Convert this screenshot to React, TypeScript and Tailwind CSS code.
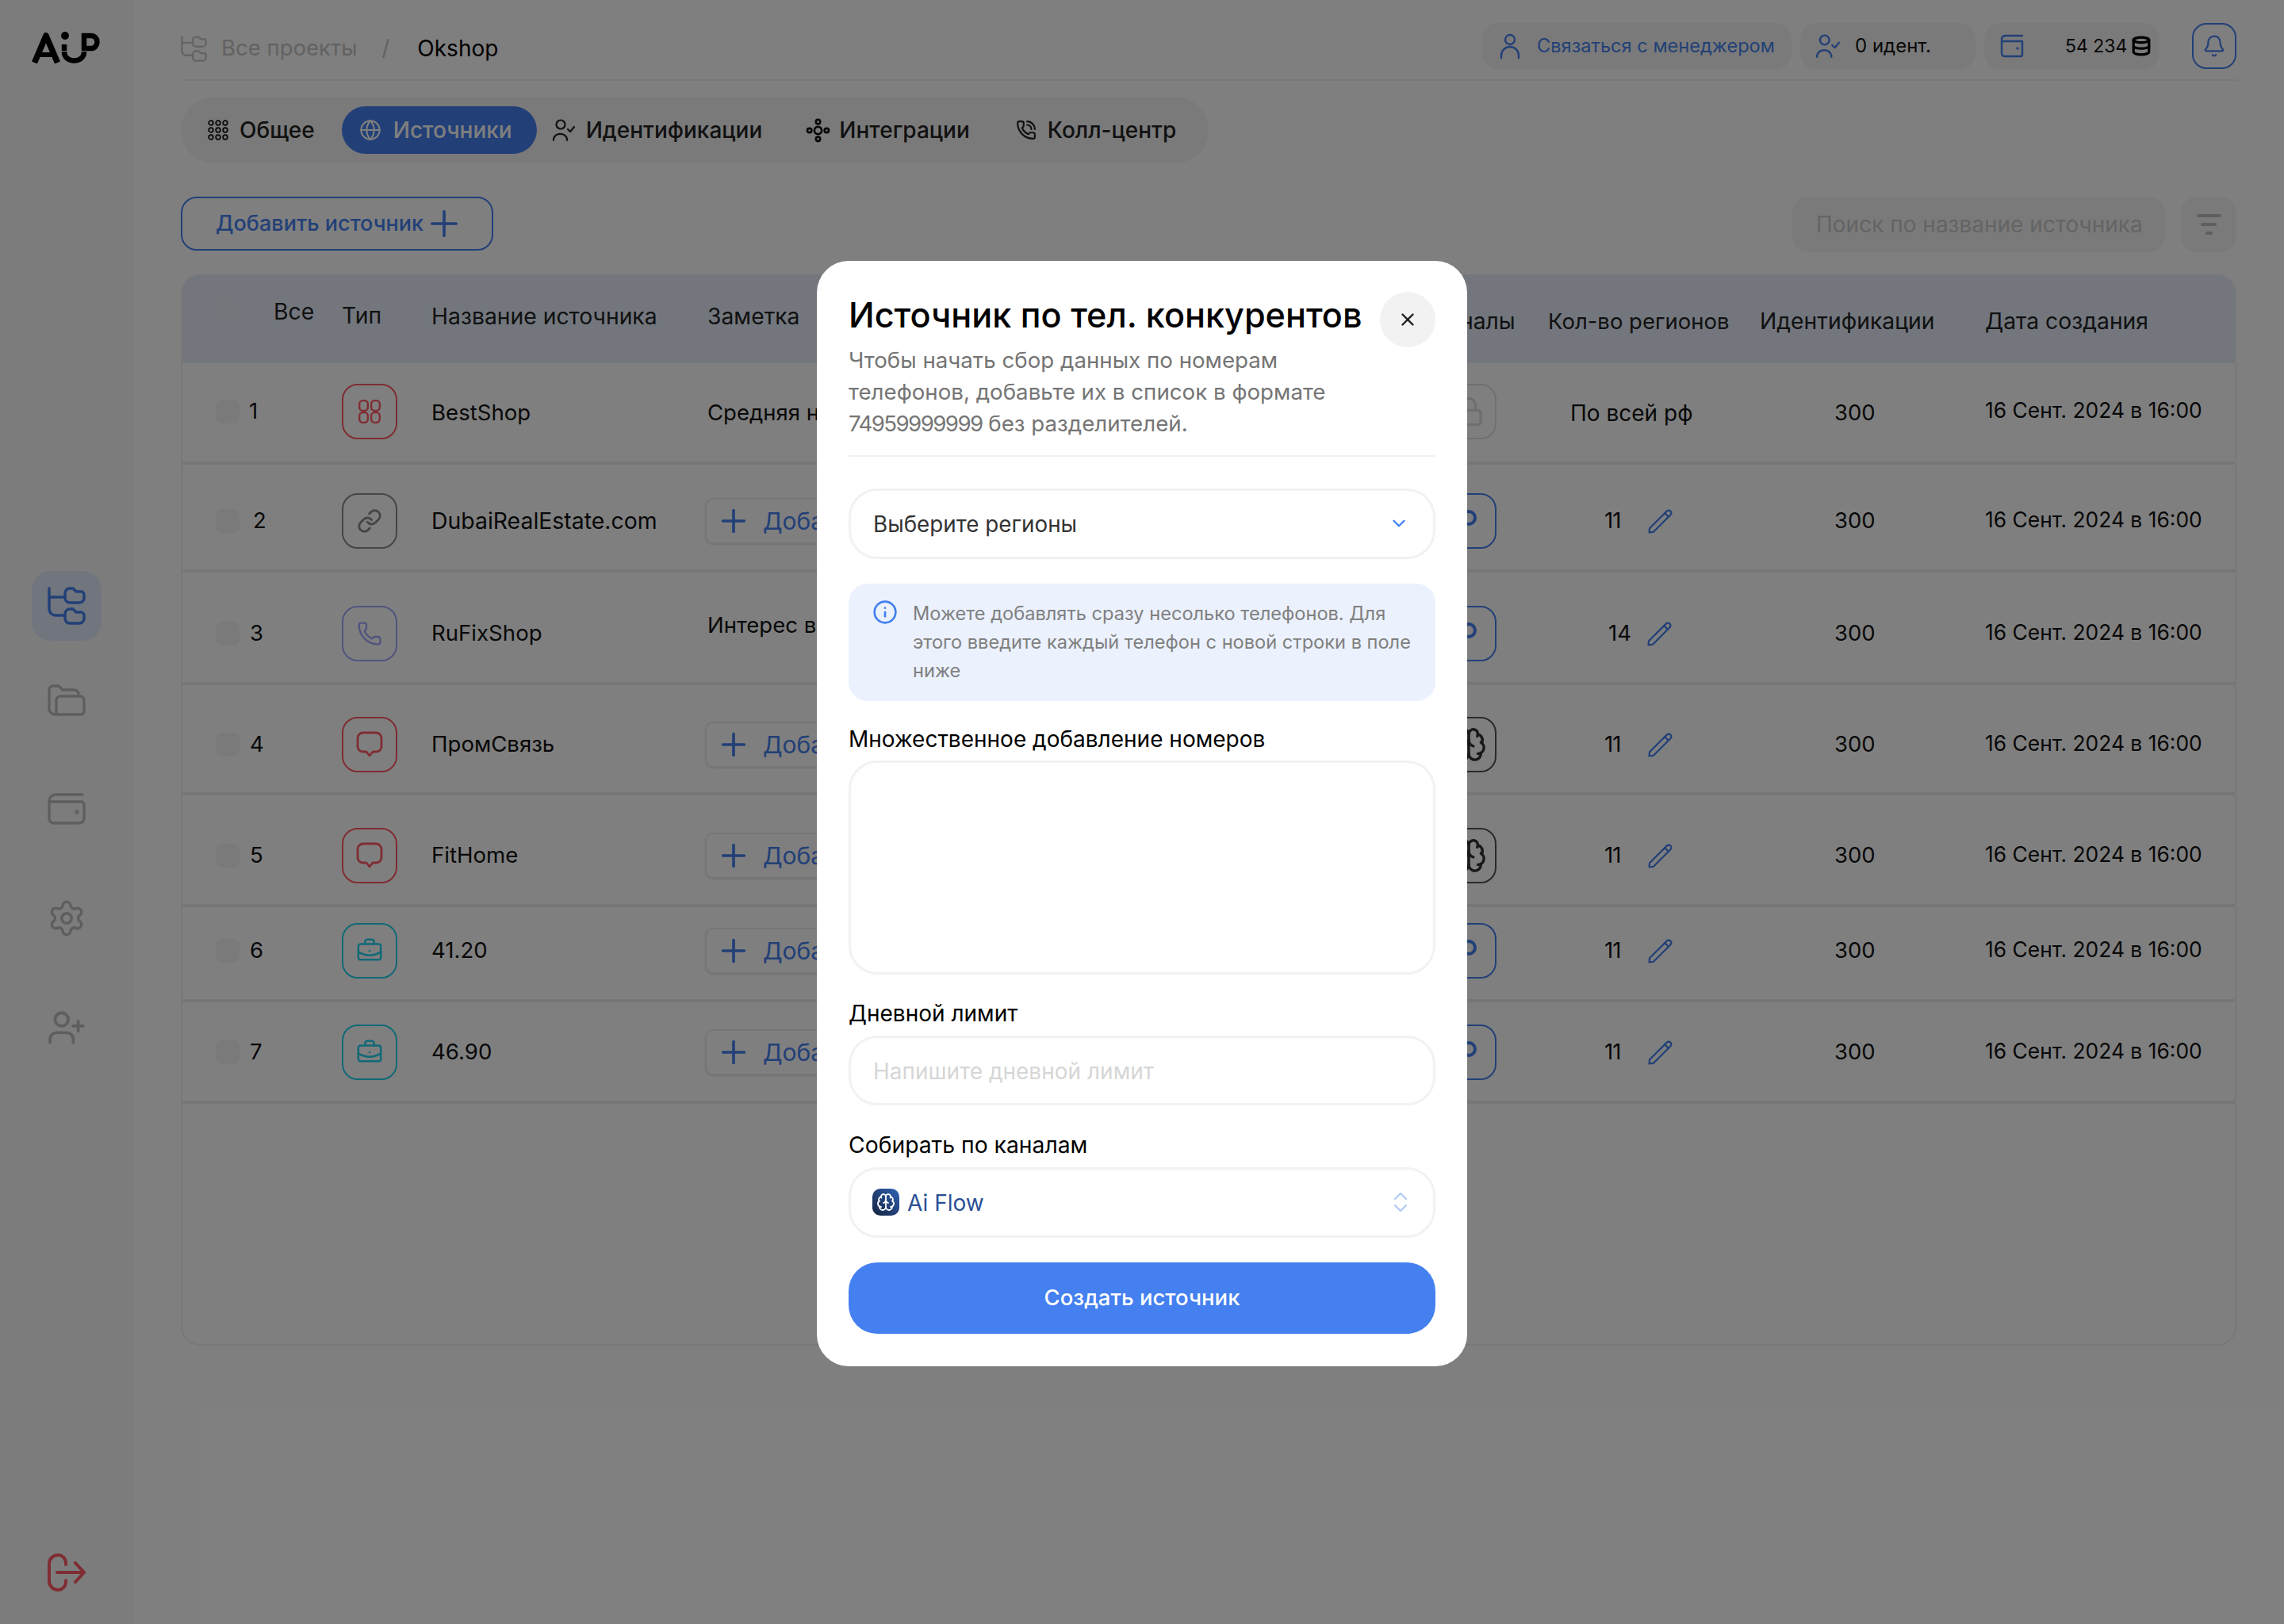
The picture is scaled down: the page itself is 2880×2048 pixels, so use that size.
import { Bell, Brain, BriefcaseBusiness, ChevronDown, Database, Globe, Info, Link, Lock, Phone, PhoneCall, Plus, Settings, UserPlus, X } from 'lucide-react'

const GRID = 'grid grid-cols-[201px_113px_348px_925px_135px_267px_284px_1fr]'

const rows = [
    { n: '1', nCls: 'ml-[12px]', cell: 'h-[73px]', name: 'BestShop', row: 'h-[128px] pt-[26px]', type: 'red-grid', channel: 'lock', region: 'По всей рф', note: 'Средняя нагрузка' },
    { n: '2', nCls: 'ml-[17px]', cell: 'h-[70px]', name: 'DubaiRealEstate.com', row: 'h-[136px] pt-[36px]', type: 'link', channel: 'blue', region: '11' },
    { n: '3', nCls: 'ml-[13px]', cell: 'h-[70px]', name: 'RuFixShop', row: 'h-[142px] pt-[42px]', type: 'phone', channel: 'blue', region: '14', note: 'Интерес высокий', noteCls: '-mt-[20px]' },
    { n: '4', nCls: 'ml-[13px]', cell: 'h-[70px]', name: 'ПромСвязь', row: 'h-[139px] pt-[40px]', type: 'chat', channel: 'brain', region: '11' },
    { n: '5', nCls: 'ml-[13px]', cell: 'h-[70px]', name: 'FitHome', row: 'h-[141px] pt-[41px]', type: 'chat', channel: 'brain', region: '11' },
    { n: '6', nCls: 'ml-[13px]', cell: 'h-[70px]', name: '41.20', row: 'h-[120px] pt-[20px]', type: 'case', channel: 'blue', region: '11' },
    { n: '7', nCls: 'ml-[13px]', cell: 'h-[70px]', name: '46.90', row: 'h-[128px] pt-[28px]', type: 'case', channel: 'blue', region: '11' },
]

function FolderTree({ className }: { className?: string }) {
    return (
        <svg viewBox="0 0 48 48" fill="none" stroke="currentColor" strokeWidth="3.4" strokeLinecap="round" strokeLinejoin="round" className={className}>
            <path d="M2 2V28a8 8 0 0 0 8 8H22M2 13H22" />
            <path d="M22 8a6 6 0 0 1 6-6h4l4 4h6a4 4 0 0 1 4 4v4a6 6 0 0 1-6 6H28a6 6 0 0 1-6-6Z" />
            <path d="M22 34a6 6 0 0 1 6-6h4l4 4h6a4 4 0 0 1 4 4v4a6 6 0 0 1-6 6H28a6 6 0 0 1-6-6Z" />
        </svg>
    )
}

function Logo() {
    return (
        <svg viewBox="0 0 88 40" fill="none" stroke="#000" className="w-[88px] h-[40px]">
            <path d="M3.5 39 18 5 32.5 39" strokeWidth="7.5" strokeLinejoin="round" />
            <path d="M9 29H27" strokeWidth="6" />
            <circle cx="42" cy="5" r="5" fill="#000" stroke="none" />
            <path d="M41 16V24" strokeWidth="6.5" />
            <path d="M41 25V26a12.5 10.5 0 0 0 25 0V25" strokeWidth="6.5" />
            <path d="M66 24V5H75a7.5 8 0 0 1 0 16H69" strokeWidth="6.5" />
        </svg>
    )
}

function PencilIcon() {
    return (
        <svg viewBox="0 0 30 30" fill="none" stroke="#4480EF" strokeWidth="2.2" strokeLinejoin="round" strokeLinecap="round" className="w-[31px] h-[31px]">
            <path d="M1.5 28.5 2 23.5 23 2.5a3 3 0 0 1 4.5 4.5L6.5 28Z" />
            <path d="M20.5 5 25 9.5" />
        </svg>
    )
}

function UserCheck({ className }: { className?: string }) {
    return (
        <svg viewBox="0 0 30 30" fill="none" stroke="currentColor" strokeWidth="2.2" strokeLinecap="round" strokeLinejoin="round" className={className}>
            <circle cx="11" cy="8" r="5.5" />
            <path d="M2 28v-2a9 9 0 0 1 17 0v2" />
            <path d="m20 14 3 3 5-6" />
        </svg>
    )
}

function Dots() {
    return (
        <svg viewBox="0 0 26 26" fill="none" stroke="#111" strokeWidth="1.8" className="w-[26px] h-[26px]">
            {[4, 13, 22].map(y => [4, 13, 22].map(x => <circle key={`${x}-${y}`} cx={x} cy={y} r="2.8" />))}
        </svg>
    )
}

function Hub() {
    return (
        <svg viewBox="0 0 30 30" fill="none" stroke="#111" strokeWidth="2.6" className="w-[31px] h-[31px]">
            <circle cx="15" cy="15" r="4.5" />
            <circle cx="15" cy="4.5" r="2.6" />
            <circle cx="15" cy="25.5" r="2.6" />
            <circle cx="4.5" cy="15" r="2.6" />
            <circle cx="25.5" cy="15" r="2.6" />
        </svg>
    )
}

function TypeIcon({ type }: { type: string }) {
    if (type === 'red-grid') {
        return (
            <div className="w-[70px] h-[70px] rounded-[20px] border-2 border-[#ff5a66] text-[#ff5a66] flex items-center justify-center">
                <svg viewBox="0 0 30 30" fill="none" stroke="currentColor" strokeWidth="2.2" className="w-[32px] h-[32px]">
                    <rect x="3" y="2" width="10" height="12" rx="4" />
                    <rect x="17" y="2" width="10" height="12" rx="4" />
                    <rect x="3" y="16" width="10" height="12" rx="4" />
                    <rect x="17" y="16" width="10" height="12" rx="4" />
                </svg>
            </div>
        )
    }
    if (type === 'link') {
        return (
            <div className="w-[70px] h-[70px] rounded-[20px] border-2 border-[#8c8c8c] text-[#8c8c8c] flex items-center justify-center">
                <Link size={32} strokeWidth={2.2} />
            </div>
        )
    }
    if (type === 'phone') {
        return (
            <div className="w-[70px] h-[70px] rounded-[20px] border-2 border-[#a0a8ff] text-[#a0a8ff] flex items-center justify-center">
                <Phone size={32} strokeWidth={1.8} />
            </div>
        )
    }
    if (type === 'chat') {
        return (
            <div className="w-[70px] h-[70px] rounded-[20px] border-2 border-[#ff5a66] text-[#ff5a66] flex items-center justify-center">
                <svg viewBox="0 0 34 34" fill="none" stroke="currentColor" strokeWidth="2.8" strokeLinejoin="round" className="w-[34px] h-[34px]">
                    <path d="M9 2h16a7 7 0 0 1 7 7v11a7 7 0 0 1-7 6h-4l-4 5-4-5H9a7 7 0 0 1-7-6V9a7 7 0 0 1 7-7Z" />
                </svg>
            </div>
        )
    }
    return (
        <div className="w-[70px] h-[70px] rounded-[20px] border-2 border-[#22d3ee] text-[#22d3ee] flex items-center justify-center">
            <BriefcaseBusiness size={34} strokeWidth={1.8} />
        </div>
    )
}

function ChannelIcon({ channel }: { channel: string }) {
    if (channel === 'lock') {
        return (
            <div className="w-[70px] h-[70px] rounded-[20px] border-2 border-[#e0e0e0] text-[#dcdcdc] flex items-center justify-center">
                <Lock size={40} strokeWidth={2} />
            </div>
        )
    }
    if (channel === 'brain') {
        return (
            <div className="w-[70px] h-[70px] rounded-[20px] border-2 border-[#555] text-[#333] flex items-center justify-center">
                <Brain size={46} strokeWidth={1.8} />
            </div>
        )
    }
    return (
        <div className="w-[70px] h-[70px] rounded-[20px] border-2 border-[#4480EF] flex items-center justify-center">
            <div className="w-[20px] h-[20px] -mt-[8px] rounded-full border-[4px] border-[#4480EF]" />
        </div>
    )
}

function Row({ row }: { row: (typeof rows)[number] }) {
    return (
        <div className={`${GRID} items-start border-b-4 border-[#ececec] text-[27.5px] text-[#111] ${row.row}`}>
            <div className="h-[70px] flex items-center pl-[42px]">
                <div className="w-[30px] h-[30px] rounded-[8px] bg-[#f4f4f4]" />
                <span className={row.nCls}>{row.n}</span>
            </div>
            <TypeIcon type={row.type} />
            <div className={`${row.cell} flex items-center ${row.n === '2' ? 'text-[28.4px]' : 'text-[27.6px]'}`}>{row.name}</div>
            <div className={`${row.cell} flex items-center`}>
                {row.note ? (
                    <span className={row.noteCls}>{row.note}</span>
                ) : (
                    <div className="-ml-[3px] flex items-center gap-[14px] h-[58px] pl-[11px] pr-[20px] rounded-[10px] border-2 border-[#ececec] shadow-sm text-[#4480EF] text-[30px]">
                        <Plus size={46} strokeWidth={1.9} />
                        <span>Добавить</span>
                    </div>
                )}
            </div>
            <ChannelIcon channel={row.channel} />
            <div className={`${row.cell} flex items-center`}>
                {row.region === 'По всей рф' ? (
                    <span className="pl-[28px] text-[28px]">По всей рф</span>
                ) : row.region === '14' ? (
                    <span className="flex items-center pl-[76px] gap-[20px]">14 <PencilIcon /></span>
                ) : (
                    <span className="flex items-center pl-[71px] gap-[35px] tracking-[-1px]">11 <PencilIcon /></span>
                )}
            </div>
            <div className={`${row.cell} flex items-center pl-[94px]`}>300</div>
            <div className="h-[70px] -mt-[1px] flex items-center text-[26.4px]">16 Сент. 2024 в 16:00</div>
        </div>
    )
}

export default function App() {
    return (
        <div className="relative w-[2880px] h-[2048px] overflow-hidden bg-white flex font-['Inter',sans-serif] text-[#111]">
            {/* Сайдбар */}
            <aside className="w-[168px] h-full bg-[#f8f8f8] flex flex-col items-center text-[#bdbdbd]">
                <div className="mt-[40px]">
                    <Logo />
                </div>
                <div className="mt-[640px] w-[88px] h-[88px] rounded-[24px] bg-[#e0ebfc] flex items-center justify-center text-[#4480EF]">
                    <FolderTree className="w-[48px] h-[48px]" />
                </div>
                <svg viewBox="0 0 48 40" fill="none" stroke="currentColor" strokeWidth="3.4" strokeLinejoin="round" strokeLinecap="round" className="mt-[55px] w-[48px] h-[40px]">
                    <path d="M2 28V7a5 5 0 0 1 5-5h7l5 5h14a6 6 0 0 1 6 5" />
                    <path d="M2 28a8 8 0 0 0 8 10h32a4 4 0 0 0 4-4V20a5 5 0 0 0-5-5H16a5 5 0 0 0-5 5v18" />
                </svg>
                <svg viewBox="0 0 48 40" fill="none" stroke="currentColor" strokeWidth="3.4" strokeLinejoin="round" strokeLinecap="round" className="mt-[97px] w-[48px] h-[40px]">
                    <path d="M44 2H10a8 8 0 0 0-8 8v22a6 6 0 0 0 6 6h32a6 6 0 0 0 6-6V15a4 4 0 0 0-4-4H2" />
                    <circle cx="37" cy="24" r="1" />
                </svg>
                <Settings size={50} strokeWidth={1.7} className="mt-[93px]" />
                <UserPlus size={50} strokeWidth={1.8} className="mt-[88px]" />
                <svg viewBox="0 0 48 48" fill="none" stroke="#ff5a66" strokeWidth="4" strokeLinecap="round" strokeLinejoin="round" className="mt-auto mb-[41px] w-[48px] h-[48px]">
                    <path d="M23 14V12a10 10 0 0 0-10-10h0A11 11 0 0 0 2 13v22a11 11 0 0 0 11 11h0a10 10 0 0 0 10-10v-2" />
                    <path d="M12 24H46M35 12l11 12-11 12" />
                </svg>
            </aside>

            <main className="flex-1 pl-[60px] pr-[60px] flex flex-col">
                {/* Шапка */}
                <header className="h-[102px] shrink-0 border-b-2 border-[#f0f0f0] flex items-start justify-between">
                    <div className="flex items-center h-[34px] mt-[44px] text-[27.5px]">
                        <FolderTree className="w-[33px] h-[33px] text-[#c8c8c8]" />
                        <span className="ml-[18px] text-[#c4c4c4]">Все проекты</span>
                        <span className="ml-[31px] text-[#c4c4c4]">/</span>
                        <span className="ml-[35px] text-[28px] text-black">Okshop</span>
                    </div>
                    <div className="flex items-start mt-[29px]">
                        <div className="w-[390px] h-[58px] rounded-[20px] bg-[#f4f4f4] flex items-center pl-[20px] text-[#4480EF] text-[23.6px]">
                            <svg viewBox="0 0 30 34" fill="none" stroke="currentColor" strokeWidth="2.4" strokeLinecap="round" className="w-[30px] h-[34px]">
                                <circle cx="15" cy="9" r="6" />
                                <path d="M4 32v-3a11 11 0 0 1 22 0v3" />
                            </svg>
                            <span className="ml-[19px]">Связаться с менеджером</span>
                        </div>
                        <div className="ml-[11px] w-[221px] h-[58px] rounded-[20px] bg-[#f4f4f4] flex items-center pl-[19px] text-[24px]">
                            <UserCheck className="w-[32px] h-[32px] text-[#4480EF]" />
                            <span className="ml-[18px]">0 идент.</span>
                        </div>
                        <div className="ml-[11px] w-[221px] h-[58px] rounded-[20px] bg-[#f4f4f4] flex items-center pl-[20px] text-[23px]">
                            <svg viewBox="0 0 30 30" fill="none" stroke="#4480EF" strokeWidth="2.4" strokeLinejoin="round" strokeLinecap="round" className="w-[30px] h-[30px]">
                                <path d="M28 2H6a5 5 0 0 0-4 5v17a4 4 0 0 0 4 4h20a2 2 0 0 0 2-2V9H2" />
                                <circle cx="22" cy="18" r="0.6" />
                            </svg>
                            <span className="ml-[52px]">54 234</span>
                            <Database size={26} strokeWidth={3} className="ml-[5px] text-black" />
                        </div>
                        <div className="ml-[41px] w-[56px] h-[58px] rounded-[18px] border-2 border-[#4480EF] text-[#4480EF] flex items-center justify-center">
                            <Bell size={30} strokeWidth={1.8} />
                        </div>
                    </div>
                </header>

                {/* Вкладки */}
                <nav className="mt-[20px] w-[1296px] h-[84px] shrink-0 rounded-full bg-[#f5f5f5] flex items-center text-[28px] font-medium text-[#222]">
                    <div className="ml-[34px] flex items-center gap-[14px]">
                        <Dots />
                        <span>Общее</span>
                    </div>
                    <div className="ml-[34px] h-[60px] pl-[22px] pr-[31px] rounded-full bg-[#4480EF] text-white flex items-center gap-[15px]">
                        <Globe size={28} strokeWidth={1.8} />
                        <span>Источники</span>
                    </div>
                    <div className="ml-[19px] flex items-center gap-[13px]">
                        <UserCheck className="w-[30px] h-[30px]" />
                        <span>Идентификации</span>
                    </div>
                    <div className="ml-[55px] flex items-center gap-[11px]">
                        <Hub />
                        <span>Интеграции</span>
                    </div>
                    <div className="ml-[58px] flex items-center gap-[14px]">
                        <PhoneCall size={26} strokeWidth={2} />
                        <span>Колл-центр</span>
                    </div>
                </nav>

                {/* Панель действий */}
                <div className="mt-[42px] h-[70px] shrink-0 flex items-start justify-between">
                    <button className="w-[394px] h-[68px] rounded-[20px] border-2 border-[#4480EF] text-[#4480EF] text-[27px] font-medium flex items-center pl-[42px] gap-0">
                        <span>Добавить источник</span>
                        <Plus size={52} strokeWidth={1.7} />
                    </button>
                    <div className="flex items-center gap-[20px]">
                        <div className="w-[470px] h-[70px] rounded-[20px] bg-[#f5f5f5] flex items-center pl-[30px] text-[28px] text-[#c8c8c8]">
                            Поиск по название источника
                        </div>
                        <div className="w-[70px] h-[70px] rounded-[20px] bg-[#f5f5f5] flex flex-col items-center justify-center gap-[7px]">
                            <div className="w-[31px] h-[4px] rounded bg-[#bdbdbd]" />
                            <div className="w-[20px] h-[4px] rounded bg-[#bdbdbd]" />
                            <div className="w-[9px] h-[4px] rounded bg-[#bdbdbd]" />
                        </div>
                    </div>
                </div>

                {/* Таблица */}
                <div className="mt-[28px] h-[1351px] shrink-0 rounded-[24px] border-2 border-t-0 border-[#f0f0f0] overflow-hidden">
                    <div className={`${GRID} h-[112px] bg-[#e6eefb] text-[28.3px] text-[#222]`}>
                        <div className="pl-[42px] flex items-start">
                            <div className="mt-[30px] w-[30px] h-[30px] rounded-[8px] bg-[#e9eff9]" />
                            <span className="ml-[43px] mt-[26px]">Все</span>
                        </div>
                        <span className="pt-[31px]">Тип</span>
                        <span className="pt-[32px]">Название источника</span>
                        <span className="pt-[32px]">Заметка</span>
                        <span className="pt-[38px] -ml-[11px]">Каналы</span>
                        <span className="pt-[39px] text-[27.5px]">Кол-во регионов</span>
                        <span className="pt-[38px]">Идентификации</span>
                        <span className="pt-[38px]">Дата создания</span>
                    </div>
                    {rows.map(row => (
                        <Row key={row.n} row={row} />
                    ))}
                </div>
            </main>

            {/* Модальное окно */}
            <div className="absolute inset-0 pt-[3px] bg-black/50 flex items-center justify-center">
                <div className="w-[820px] h-[1394px] rounded-[40px] bg-white p-[40px] flex flex-col">
                    <div className="flex items-start justify-between">
                        <h2 className="text-[43.2px] leading-[56px] font-medium text-black whitespace-nowrap">Источник по тел. конкурентов</h2>
                        <div className="w-[70px] h-[70px] -mt-[1px] rounded-full bg-[#f2f2f2] flex items-center justify-center text-[#222]">
                            <X size={26} strokeWidth={2.2} />
                        </div>
                    </div>
                    <p className="-mt-[4px] pb-[20px] border-b-2 border-[#f1f1f1] text-[27.7px] leading-[40px] text-[#757575]">
                        Чтобы начать сбор данных по номерам<br />
                        телефонов, добавьте их в список в формате<br />
                        <span className="tracking-[-1.6px]">74959999999</span> без разделителей.
                    </p>
                    <div className="mt-[40px] h-[89px] shrink-0 rounded-[36px] border-[3px] border-[#f2f2f2] flex items-center justify-between pl-[28px] pr-[30px] text-[27.8px] text-[#333]">
                        <span className="pt-[3px]">Выберите регионы</span>
                        <ChevronDown size={26} strokeWidth={2.2} className="text-[#4480EF]" />
                    </div>
                    <div className="mt-[31px] h-[148px] shrink-0 rounded-[24px] bg-[#ebf1fd] flex items-start pl-[30px] pt-[20px]">
                        <Info size={32} strokeWidth={2} className="text-[#4480EF] shrink-0" />
                        <p className="ml-[19px] text-[23.6px] leading-[36px] text-[#808080] whitespace-nowrap">
                            Можете добавлять сразу несолько телефонов. Для<br />
                            этого введите каждый телефон с новой строки в поле<br />
                            ниже
                        </p>
                    </div>
                    <label className="mt-[30px] text-[28px] leading-[36px] text-black">Множественное добавление номеров</label>
                    <textarea className="mt-[9px] h-[270px] shrink-0 resize-none rounded-[36px] border-[3px] border-[#f2f2f2] outline-none" />
                    <label className="mt-[31px] text-[28px] leading-[36px] text-black">Дневной лимит</label>
                    <input
                        placeholder="Напишите дневной лимит"
                        className="mt-[10px] h-[88px] shrink-0 rounded-[36px] border-[3px] border-[#f2f2f2] pl-[28px] pt-[3px] text-[28px] placeholder:text-[#d6d6d6] outline-none"
                    />
                    <label className="mt-[32px] text-[28.3px] leading-[36px] text-black">Собирать по каналам</label>
                    <div className="mt-[10px] h-[89px] shrink-0 rounded-[36px] border-[3px] border-[#f2f2f2] flex items-center pl-[27px] pr-[30px] text-[28px] text-[#2b4f95]">
                        <div className="w-[34px] h-[34px] rounded-[10px] bg-gradient-to-tr from-[#15243f] to-[#2f63b8] flex items-center justify-center text-white">
                            <Brain size={24} strokeWidth={1.8} />
                        </div>
                        <span className="ml-[10px] pt-[2px]">Ai Flow</span>
                        <svg viewBox="0 0 22 26" fill="none" stroke="#b4cdf8" strokeWidth="2.4" strokeLinecap="round" strokeLinejoin="round" className="ml-auto w-[22px] h-[26px]">
                            <path d="m4 9 7-7 7 7M4 17l7 7 7-7" />
                        </svg>
                    </div>
                    <button className="mt-[31px] h-[90px] shrink-0 rounded-[36px] bg-[#4480EF] text-white text-[27.5px] font-medium">
                        Создать источник
                    </button>
                </div>
            </div>
        </div>
    )
}
